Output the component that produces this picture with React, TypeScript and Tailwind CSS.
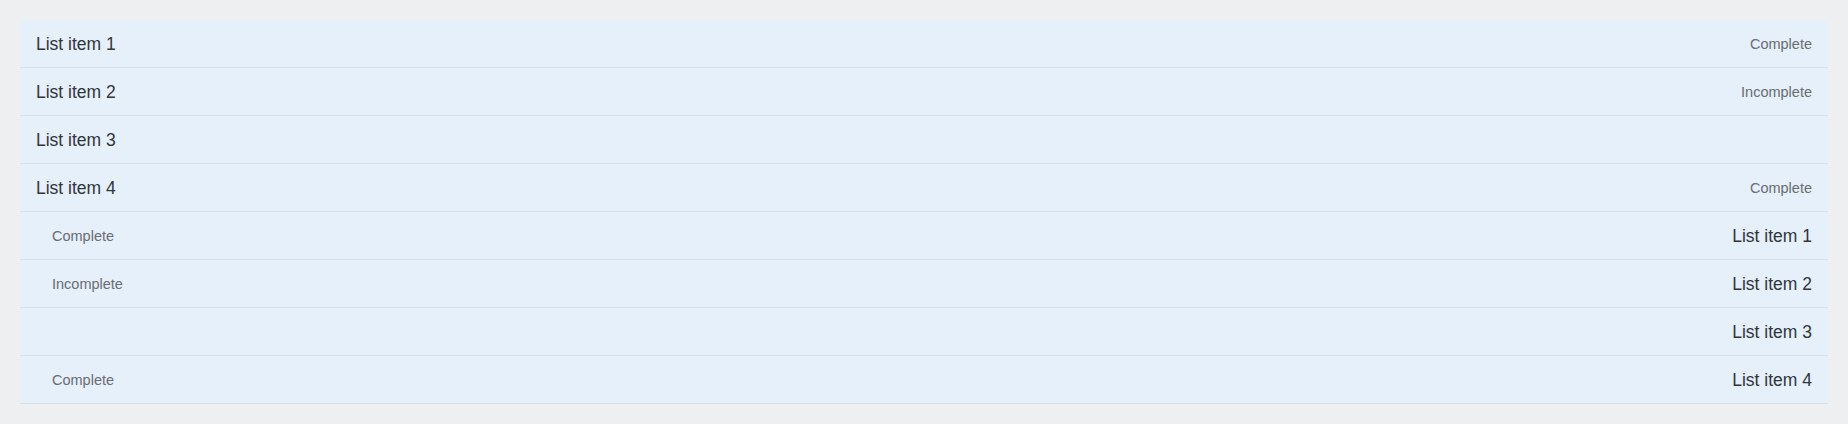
import React from "react";

const rowsA = [
  { title: "List item 1", info: "Complete" },
  { title: "List item 2", info: "Incomplete" },
  { title: "List item 3", info: "" },
  { title: "List item 4", info: "Complete" },
];

export default function App() {
  return (
    <div className="min-h-[424px] w-full bg-[#edeff0] p-5" style={{ fontFamily: '"Liberation Sans", Arial, sans-serif' }}>
      <ul className="bg-[#e5f0fa]">
        {rowsA.map((r) => (
          <li key={"a" + r.title} className="flex h-12 items-center justify-between border-b border-[#d9e1e8] px-4 pt-px">
            <span className="text-[17.5px] text-[#32363a]">{r.title}</span>
            <span className="mt-[2px] text-[14.5px] text-[#6a6d70]">{r.info}</span>
          </li>
        ))}
        {rowsA.map((r) => (
          <li key={"b" + r.title} className="flex h-12 items-center justify-between border-b border-[#d9e1e8] pl-8 pr-4 pt-px">
            <span className="mt-[2px] text-[14.5px] text-[#6a6d70]">{r.info}</span>
            <span className="text-[17.5px] text-[#32363a]">{r.title}</span>
          </li>
        ))}
      </ul>
    </div>
  );
}
